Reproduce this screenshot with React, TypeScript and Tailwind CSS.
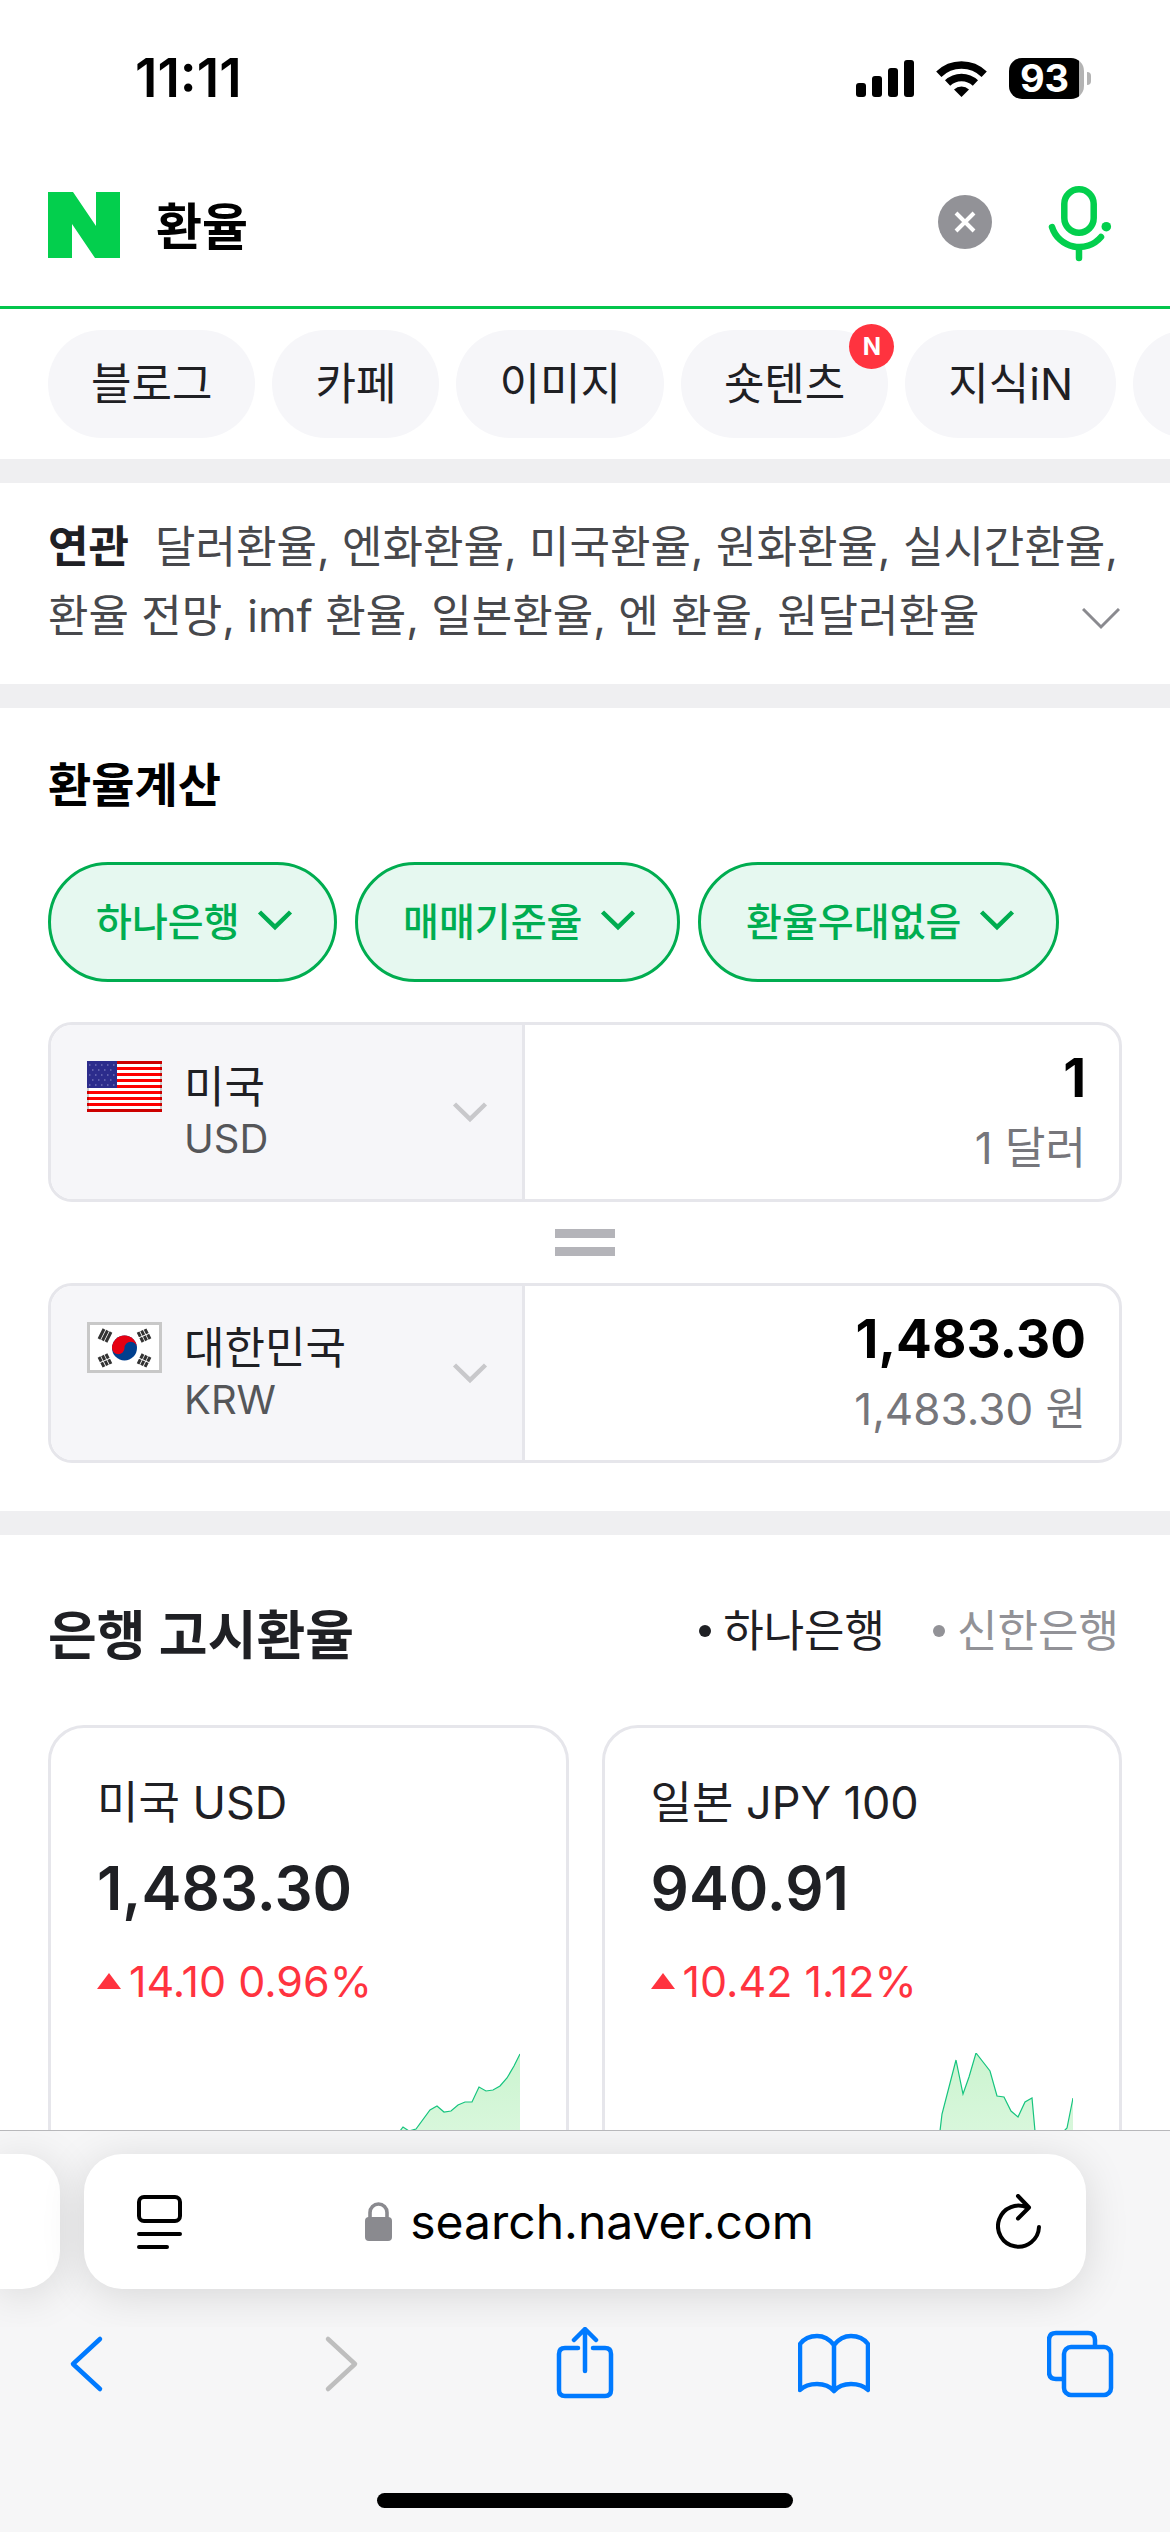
import { useState } from 'react';
import type { ReactNode } from 'react';

interface Rate {
  id: string;
  label: string;
  price: string;
  change: string;
  line: string;
}

const TABS = [
  { label: '블로그' },
  { label: '카페' },
  { label: '이미지' },
  { label: '숏텐츠', isNew: true },
  { label: '지식iN' },
];

const RELATED = [
  '달러환율', '엔화환율', '미국환율', '원화환율', '실시간환율',
  '환율 전망', 'imf 환율', '일본환율', '엔 환율', '원달러환율',
];

const FILTERS = [
  { label: '은행', value: '하나은행' },
  { label: '환율 기준', value: '매매기준율' },
  { label: '환율 우대', value: '환율우대없음' },
];

const BANKS = ['하나은행', '신한은행'];

const RATES: Rate[] = [
  {
    id: 'usd',
    label: '미국 USD',
    price: '1,483.30',
    change: '14.10 0.96%',
    line: '0,150 14,92 20,78 23,74 29,78 36,76 50,57 57,53 64,59 71,58 78,52 85,49 92,49 99,34 106,38 113,37 120,33 127,25 134,13 140,1',
  },
  {
    id: 'jpy',
    label: '일본 JPY 100',
    price: '940.91',
    change: '10.42 1.12%',
    line: '0,130 7,78 9,61 23,7 30,41 36,24 43,0 57,18 64,43 71,44 78,58 85,64 92,49 99,45 102,78 108,120 124,110 131,78 134,75 140,45',
  },
];

function StatusBar() {
  return (
    <div className="flex h-36 shrink-0 items-center justify-between pt-3 pr-[79px] pl-[135px]">
      <span className="text-[53px] leading-none font-semibold text-black">11:11</span>
      <div className="flex items-center gap-[22px]">
        <svg width="58" height="37" viewBox="0 0 58 37">
          <rect x="0" y="23" width="10" height="14" rx="3" />
          <rect x="16" y="16" width="10" height="21" rx="3" />
          <rect x="32" y="8" width="10" height="29" rx="3" />
          <rect x="48" y="0" width="10" height="37" rx="3" />
        </svg>
        <svg width="51" height="37" viewBox="0 0 51 37" fill="none" stroke="#000" strokeWidth="7.5">
          <path d="M2.8 14.2A32.5 32.5 0 0 1 48.2 14.2" />
          <path d="M11.6 23A20 20 0 0 1 39.4 23" />
          <path d="M25.5 37L18 29.5A11 11 0 0 1 33 29.5Z" fill="#000" stroke="none" />
        </svg>
        <div className="flex items-center gap-[3px]">
          <div className="flex h-[41px] w-[75px] items-center justify-center rounded-[13px] bg-linear-to-r from-black from-[93%] to-[#b3b3b3] to-[93%] pr-1">
            <span className="text-[38px] leading-none font-bold text-white">93</span>
          </div>
          <div className="h-[13px] w-1 rounded-r-full bg-[#b3b3b3]" />
        </div>
      </div>
    </div>
  );
}

function SearchHeader() {
  const [query, setQuery] = useState('환율');

  return (
    <header className="flex h-[165px] shrink-0 items-center border-b-[3px] border-[#03c54c] pr-[58px] pl-12">
      <a href="#home" aria-label="네이버">
        <svg width="72" height="66" viewBox="0 0 72 66" fill="#03cf4d">
          <path d="M0 0H25L48 34V0H72V66H47L24 32V66H0Z" />
        </svg>
      </a>
      <input
        aria-label="검색어"
        className="mb-1 ml-9 h-20 min-w-0 flex-1 text-[50px] font-bold text-black outline-none"
        value={query}
        onChange={e => setQuery(e.target.value)}
      />
      <button aria-label="지우기" onClick={() => setQuery('')} className="mb-1.5 rounded-full bg-[#929297]">
        <svg width="54" height="54" viewBox="0 0 54 54" fill="none" stroke="#fff" strokeWidth="4">
          <path d="M18 18L36 36M36 18L18 36" />
        </svg>
      </button>
      <button aria-label="음성 검색" className="mb-1 ml-14">
        <svg width="64" height="78" viewBox="0 0 64 78" fill="none" stroke="#03cf4d" strokeWidth="6.5" strokeLinecap="round">
          <rect x="16.3" y="5.3" width="29.4" height="43.4" rx="14.7" />
          <path d="M4 43A28.5 28.5 0 0 0 53 53M31 65V74" />
          <circle cx="58.3" cy="42.7" r="4.8" fill="#03cf4d" stroke="none" />
        </svg>
      </button>
    </header>
  );
}

function Chevron({ className, thin }: { className: string; thin?: boolean }) {
  return (
    <svg width="38" height="22" viewBox="0 0 38 22" fill="none" stroke="currentColor" strokeWidth={thin ? 3 : 4.5} className={className}>
      <path d={thin ? 'M1 1L19 19L37 1' : 'M3.5 3L19 18L34.5 3'} />
    </svg>
  );
}

function UsFlag() {
  return (
    <svg width="75" height="51" viewBox="0 0 75 51" className="shrink-0">
      <rect width="75" height="51" fill="#fff" />
      {[0, 6, 12, 18, 24, 30, 36, 42, 48].map(y => (
        <rect key={y} y={y} width="75" height="3" fill={y === 0 || y === 48 ? '#cc0000' : '#ff0000'} />
      ))}
      <path d="M1 27V48M74 3V48" stroke="#000" strokeOpacity=".2" strokeWidth="2" />
      <rect width="30" height="27" fill="#2c2c8c" />
      {[4, 9, 14, 19, 24].map((y, i) => (
        <path key={y} d={`M${i % 2 ? 5 : 2} ${y}H29`} stroke="#7070b8" strokeWidth="1.5" strokeDasharray="1.5 4.5" />
      ))}
    </svg>
  );
}

function KrFlag() {
  return (
    <svg width="75" height="51" viewBox="0 0 75 51" className="shrink-0">
      <rect x="1.5" y="1.5" width="72" height="48" fill="#fff" stroke="#c8c8c8" strokeWidth="3" />
      <circle cx="37.5" cy="26" r="12.5" fill="#003f8e" />
      <path d="M25 26A12.5 12.5 0 0 1 50 26A6.25 6.25 0 0 0 37.5 26A6.25 6.25 0 0 1 25 26Z" fill="#e60012" />
      <g stroke="#333" strokeWidth="3">
        <path d="M12 17L17 7M15.5 18.5L20.5 8.5M19 20L24 10" />
        <path d="M63 17L58 7M59.5 18.5L54.5 8.5M56 20L51 10" strokeDasharray="5 1" />
        <path d="M12 35L17 45M15.5 33.5L20.5 43.5M19 32L24 42" strokeDasharray="5 1" />
        <path d="M63 35L58 45M59.5 33.5L54.5 43.5M56 32L51 42" strokeDasharray="5 1" />
      </g>
    </svg>
  );
}

interface CurrencyRowProps {
  flag: ReactNode;
  name: string;
  code: string;
  amount: string;
  unit: string;
}

function CurrencyRow({ flag, name, code, amount, unit }: CurrencyRowProps) {
  const [value, setValue] = useState(amount);

  return (
    <div className="flex h-[180px] overflow-hidden rounded-3xl border-[3px] border-[#e6e6eb]">
      <div className="relative flex w-[474px] shrink-0 border-r-[3px] border-[#e6e6eb] bg-[#f6f6f9] pt-9 pl-9">
        {flag}
        <div className="ml-[22px] flex flex-1 flex-col">
          <select aria-label="통화" className="h-[52px] w-full appearance-none text-[44px] leading-[52px] text-[#1f2024] outline-none">
            <option>{name}</option>
          </select>
          <span className="text-[40px] leading-[52px] text-[#555659]">{code}</span>
        </div>
        <Chevron className="pointer-events-none absolute top-[76px] right-[33px] text-[#c8c8cb]" />
      </div>
      <div className="flex min-w-0 flex-1 flex-col justify-center pt-1.5 pr-[33px] text-right">
        <input
          aria-label={`${code} 금액`}
          inputMode="decimal"
          className="h-[66px] w-full text-right text-[53px] font-bold text-black outline-none"
          value={value}
          onChange={e => setValue(e.target.value)}
        />
        <span className="h-[72px] text-[44px] leading-[72px] text-[#76767b]">{unit}</span>
      </div>
    </div>
  );
}

function RateCard({ rate }: { rate: Rate }) {
  return (
    <a href={`#${rate.id}`} className="flex flex-col rounded-[36px] border-[3px] border-[#e6e6eb] px-[46px] pt-[47px]">
      <span className="text-[45px] leading-[56px] text-[#1f2024]">{rate.label}</span>
      <strong className="mt-[19px] text-[60px] leading-[76px] font-semibold text-[#1f2024]">{rate.price}</strong>
      <span className="mt-[27px] flex items-center gap-2 text-[43px] leading-[56px] text-[#ff333f]">
        <svg width="24" height="16" viewBox="0 0 24 16" fill="currentColor">
          <path d="M12 0L24 16H0Z" />
        </svg>
        {rate.change}
      </span>
      <svg width="140" height="160" viewBox="0 0 140 160" className="mt-11 self-end">
        <defs>
          <linearGradient id={`area-${rate.id}`} x1="0" y1="0" x2="0" y2="1">
            <stop offset="0" stopColor="#cbf4cf" />
            <stop offset="1" stopColor="#e6fae9" />
          </linearGradient>
        </defs>
        <polygon points={`0,160 ${rate.line} 140,160`} fill={`url(#area-${rate.id})`} />
        <polyline points={rate.line} fill="none" stroke="#15c47e" strokeWidth="1.2" />
      </svg>
    </a>
  );
}

function BrowserBar() {
  return (
    <footer className="shrink-0 border-t border-[#b8b8bb] bg-[#f6f6f7]">
      <div className="flex gap-6 overflow-hidden pt-[23px] pr-[84px] pb-[38px]">
        <div className="h-[135px] w-[60px] rounded-r-[38px] bg-white shadow-[0_6px_44px_rgba(0,0,0,0.13)]" />
        <div className="flex h-[135px] flex-1 items-center justify-between rounded-[38px] bg-white px-11 shadow-[0_6px_44px_rgba(0,0,0,0.13)]">
          <button aria-label="페이지 메뉴" className="pl-2">
            <svg width="47" height="56" viewBox="0 0 47 56" fill="none" stroke="#000" strokeWidth="4" strokeLinecap="round">
              <rect x="3" y="3" width="41" height="24" rx="5" />
              <path d="M3 40H44M3 53H31" />
            </svg>
          </button>
          <button className="flex items-center gap-[18px] text-[48px] leading-none text-black">
            <svg width="27" height="39" viewBox="0 0 27 39" fill="none">
              <rect y="15" width="27" height="24" rx="4" fill="#8a8a8f" />
              <path d="M5 17V10.5A8.5 8.5 0 0 1 22 10.5V17" stroke="#8a8a8f" strokeWidth="3.6" />
            </svg>
            search.naver.com
          </button>
          <button aria-label="새로고침">
            <svg width="46" height="56" viewBox="0 0 46 56" fill="none" stroke="#000" strokeWidth="4" strokeLinecap="round" strokeLinejoin="round">
              <path d="M43 33A20.5 20.5 0 1 1 32 14M22 2L33 13.5L22 24.5" />
            </svg>
          </button>
        </div>
      </div>
      <nav className="flex justify-between px-[51px] text-[#007aff]">
        <button aria-label="뒤로">
          <ToolIcon><path d="M49 12L22 37L49 62" /></ToolIcon>
        </button>
        <button aria-label="앞으로" disabled className="text-[#bebebe]">
          <ToolIcon><path d="M28 12L55 37L28 62" /></ToolIcon>
        </button>
        <button aria-label="공유">
          <ToolIcon>
            <path d="M29 21H16Q10 21 10 27V63Q10 69 16 69H56Q62 69 62 63V27Q62 21 56 21H44" />
            <path d="M36 44V3M25 13L36 2L47 13" />
          </ToolIcon>
        </button>
        <button aria-label="책갈피">
          <ToolIcon>
            <path d="M36 18Q29 9 19 9Q8 9 2 17V63Q8 57 19 57Q30 57 36 64Q42 57 53 57Q64 57 70 63V17Q64 9 53 9Q43 9 36 18ZM36 18V64" />
          </ToolIcon>
        </button>
        <button aria-label="탭">
          <ToolIcon>
            <path d="M16 52H9Q2 52 2 45V13Q2 6 9 6H41Q48 6 48 13V19" />
            <rect x="17" y="20" width="47" height="48" rx="7" />
          </ToolIcon>
        </button>
      </nav>
      <div className="mx-auto mt-[93px] mb-6 h-[15px] w-[416px] rounded-full bg-black" />
    </footer>
  );
}

function ToolIcon({ children }: { children: ReactNode }) {
  return (
    <svg width="72" height="73" viewBox="0 0 72 73" fill="none" stroke="currentColor" strokeWidth="4.5" strokeLinecap="round" strokeLinejoin="round">
      {children}
    </svg>
  );
}

export default function App() {
  const [bank, setBank] = useState(BANKS[0]);

  return (
    <div className="flex h-screen flex-col bg-white font-['Inter','Noto_Sans_CJK_KR',sans-serif]">
      <StatusBar />
      <SearchHeader />

      <main className="min-h-0 flex-1 overflow-hidden">
        {/* Search categories */}
        <nav className="flex gap-[17px] overflow-hidden py-[21px] pl-12">
          {TABS.map(tab => (
            <a
              key={tab.label}
              href={`#${tab.label}`}
              className="relative h-[108px] shrink-0 rounded-full bg-[#f6f6f9] px-[43px] text-[44px] leading-[108px] text-[#1f2024]"
            >
              {tab.label}
              {tab.isNew && (
                <span className="absolute -top-1.5 -right-1.5 h-[45px] w-[45px] rounded-full bg-[#ff333f] text-center text-2xl leading-[45px] font-bold text-white">
                  N
                </span>
              )}
            </a>
          ))}
          <a href="#more" aria-label="더보기" className="h-[108px] w-[206px] shrink-0 rounded-full bg-[#f6f6f9]" />
        </nav>

        {/* Related searches */}
        <section className="relative border-t-24 border-[#efeff1] px-12 pt-[30px] pb-[33px]">
          <p className="text-[44px] leading-[69px] break-keep text-[#47484c]">
            <strong className="mr-[26px] font-semibold text-[#1f2024]">연관</strong>
            {RELATED.map((word, i) => (
              <span key={word}>
                <a href={`#${word}`}>{word}</a>
                {i < RELATED.length - 1 && ', '}
              </span>
            ))}
          </p>
          <button aria-label="펼치기" className="absolute right-[50px] bottom-[54px] text-[#8a8a8f]">
            <Chevron thin className="block" />
          </button>
        </section>

        {/* Calculator */}
        <section className="border-t-24 border-[#efeff1] px-12 py-12">
          <h2 className="text-[47px] leading-[58px] font-bold text-black">환율계산</h2>
          <div className="mt-12 flex gap-[18px]">
            {FILTERS.map(f => (
              <div key={f.label} className="relative">
                <select
                  aria-label={f.label}
                  className="h-[120px] appearance-none rounded-full border-[3px] border-[#00ad50] bg-[#e6f8f0] pr-[94px] pl-[45px] text-[39px] font-medium text-[#00ad50] outline-none"
                >
                  <option>{f.value}</option>
                </select>
                <Chevron className="pointer-events-none absolute top-[47px] right-[43px] text-[#00ad50]" />
              </div>
            ))}
          </div>
          <div className="mt-10">
            <CurrencyRow flag={<UsFlag />} name="미국" code="USD" amount="1" unit="1 달러" />
            <div className="flex h-[81px] flex-col items-center justify-center gap-[9px]">
              <div className="h-[9px] w-[60px] bg-[#b4b4b9]" />
              <div className="h-[9px] w-[60px] bg-[#b4b4b9]" />
            </div>
            <CurrencyRow flag={<KrFlag />} name="대한민국" code="KRW" amount="1,483.30" unit="1,483.30 원" />
          </div>
        </section>

        {/* Bank rates */}
        <section className="border-t-24 border-[#efeff1] px-12 pt-[67px]">
          <div className="flex items-start justify-between">
            <h2 className="text-[53px] leading-[68px] font-semibold text-[#1f2024]">은행 고시환율</h2>
            <div className="flex gap-12 pr-[3px]">
              {BANKS.map(b => (
                <button
                  key={b}
                  onClick={() => setBank(b)}
                  className={`flex items-center gap-3 text-[44px] leading-[58px] ${b === bank ? 'text-[#1f2024]' : 'text-[#929297]'}`}
                >
                  <span className="h-3 w-3 rounded-full bg-current" />
                  {b}
                </button>
              ))}
            </div>
          </div>
          <div className="mt-[55px] grid grid-cols-2 gap-[33px]">
            {RATES.map(r => <RateCard key={r.id} rate={r} />)}
          </div>
        </section>
      </main>

      <BrowserBar />
    </div>
  );
}
